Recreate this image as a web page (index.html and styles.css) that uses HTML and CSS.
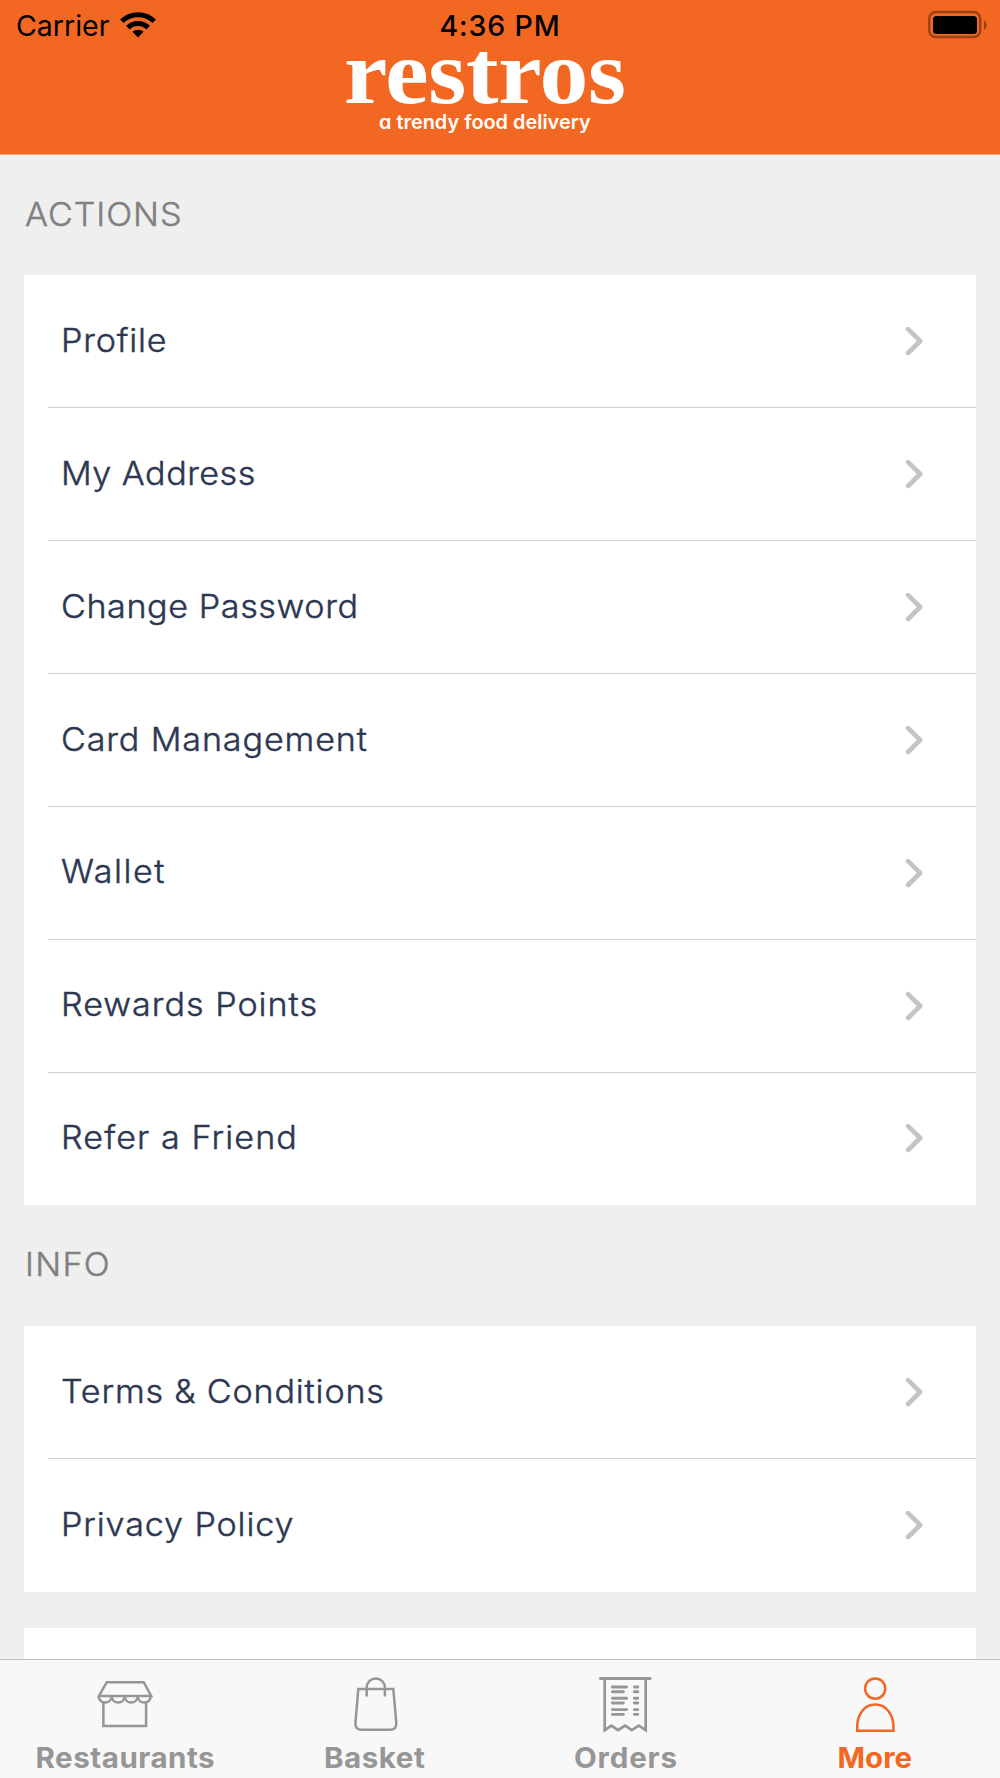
FILE: index.html
```html
<!DOCTYPE html>
<html lang="en">
<head>
<meta charset="utf-8">
<title>Restros</title>
<link rel="stylesheet" href="styles.css">
</head>
<body>
<svg class="defs" width="0" height="0">
  <symbol id="chevron" viewBox="0 0 20 32"><path d="M3.1 4.2 15.2 16 3.1 28" fill="none" stroke="currentColor" stroke-width="4.6" stroke-linecap="round" stroke-linejoin="round"/></symbol>
</svg>
<div class="screen">
  <header class="header">
    <div class="status">
      <div class="status-left">
        <span class="carrier">Carrier</span>
        <svg class="wifi" width="38" height="30" viewBox="0 0 38 30">
          <g fill="none" stroke="#000" stroke-width="5">
            <path d="M2.8 11.2a23.3 23.3 0 0 1 32.4 0"/>
            <path d="M8.8 17.6a14.8 14.8 0 0 1 20.4 0"/>
          </g>
          <path d="M19 27.5 13.4 21.8a8.3 8.3 0 0 1 11.2 0Z"/>
        </svg>
      </div>
      <span class="time">4:36 PM</span>
      <svg class="battery" width="60" height="30" viewBox="0 0 60 30">
        <rect x="1.2" y="2" width="51" height="25" rx="6.5" fill="none" stroke="#9c4214" stroke-width="2.4"/>
        <rect x="5" y="6" width="44" height="18" rx="3.5"/>
        <path d="M56 10.2q3 2 3 4.8t-3 4.8Z" fill="#9c4214"/>
      </svg>
    </div>
    <div class="brand">
      <div class="logo">restros</div>
      <div class="tagline">a trendy food delivery</div>
    </div>
  </header>

  <main class="content">
    <h2 class="section-title actions"><span>ACTIONS</span></h2>
    <ul class="card">
      <li class="row"><span class="label profile">Profile</span><svg class="chevron"><use href="#chevron"/></svg></li>
      <li class="row"><span class="label address">My Address</span><svg class="chevron"><use href="#chevron"/></svg></li>
      <li class="row"><span class="label password">Change Password</span><svg class="chevron"><use href="#chevron"/></svg></li>
      <li class="row"><span class="label cards">Card Management</span><svg class="chevron"><use href="#chevron"/></svg></li>
      <li class="row"><span class="label wallet">Wallet</span><svg class="chevron"><use href="#chevron"/></svg></li>
      <li class="row"><span class="label rewards">Rewards Points</span><svg class="chevron"><use href="#chevron"/></svg></li>
      <li class="row"><span class="label refer">Refer a Friend</span><svg class="chevron"><use href="#chevron"/></svg></li>
    </ul>
    <h2 class="section-title info"><span>INFO</span></h2>
    <ul class="card">
      <li class="row"><span class="label terms">Terms &amp; Conditions</span><svg class="chevron"><use href="#chevron"/></svg></li>
      <li class="row"><span class="label privacy">Privacy Policy</span><svg class="chevron"><use href="#chevron"/></svg></li>
    </ul>
    <div class="card next-card"></div>
  </main>

  <nav class="tabs">
    <a class="tab">
      <svg class="tab-icon" viewBox="0 0 60 60">
        <path d="M11.7 7.2h37L56.2 21H4Z"/>
        <path d="M3.8 21c-.6 8.7 12.9 8.7 12.9 0 0 8.7 13 8.7 13 0 0 8.7 13 8.7 13 0 0 8.7 13.5 8.7 12.9 0"/>
        <path d="M8.4 26.5V51h42.7V26.5"/>
      </svg>
      <span class="tab-label restaurants">Restaurants</span>
    </a>
    <a class="tab">
      <svg class="tab-icon" viewBox="0 0 60 60">
        <path d="M13.3 14h35L51.3 48q.3 6.7-6.3 6.7H16.7Q10 54.7 10.4 48Z"/>
        <path d="M21.7 21.5v-9a9.1 9.1 0 0 1 18.2 0v9"/>
      </svg>
      <span class="tab-label basket">Basket</span>
    </a>
    <a class="tab">
      <svg class="tab-icon" viewBox="0 0 60 60">
        <path stroke-width="2.8" stroke-linecap="round" d="M5.4 3.5h49.8"/>
        <path stroke-width="2.7" d="M9.7 4v51.2l6.7-4.5 6.7 4.5 7-4.5 6.7 4.5 7-4.5 6.9 4.5V4"/>
        <path stroke-width="2.9" stroke-linecap="round" d="M17.4 12h14.2M17.4 16.8h11M17.4 23.3h14.2M17.4 28h11M17.4 34.6h14.2M17.4 39.4h11M39.4 12h3.4M39.4 16.8h3.4M39.4 23.3h3.4M39.4 28h3.4M39.4 34.6h3.4M39.4 39.4h3.4"/>
      </svg>
      <span class="tab-label orders">Orders</span>
    </a>
    <a class="tab active">
      <svg class="tab-icon" viewBox="0 0 60 60">
        <circle cx="30.2" cy="13.6" r="10.1"/>
        <path d="M12.2 55.7C11.2 39 19.5 29.6 30.2 29.6S49.5 39 48.5 55.7Z"/>
      </svg>
      <span class="tab-label more">More</span>
    </a>
  </nav>
</div>
</body>
</html>
```
FILE: styles.css
```css
* { box-sizing: border-box; }
html, body { margin: 0; padding: 0; }
body { font-family: Inter, "Liberation Sans", sans-serif; background: #efefef; }
.defs { display: block; }
.screen {
  width: 1000px;
  height: 1778px;
  display: flex;
  flex-direction: column;
  overflow: hidden;
  background: #efefef;
}

.header {
  flex: none;
  height: 155px;
  background: #f26822;
  border-bottom: 1px solid #f5a680;
}
.status {
  display: grid;
  grid-template-columns: 1fr auto 1fr;
  align-items: center;
  height: 50px;
  padding: 0 12px 0 16px;
  color: #000;
  white-space: nowrap;
}
.status-left { display: flex; align-items: center; gap: 10px; }
.carrier { font-size: 28.5px; }
.time { font-size: 28.5px; font-weight: 500; letter-spacing: 0.85px; margin-right: 4px; padding-top: 1px; }
.battery { justify-self: end; }
.brand { width: 290px; margin-left: 344px; white-space: nowrap; }
.logo {
  height: 60px;
  line-height: 46px;
  font-family: "Liberation Serif", serif;
  font-size: 90px;
  font-weight: 700;
  letter-spacing: -0.3px;
  color: #fff;
  transform: scaleX(1.085);
  transform-origin: left;
}
.tagline {
  padding-left: 35px;
  height: 24px;
  line-height: 24px;
  font-size: 19.9px;
  font-weight: 600;
  font-feature-settings: "cv11";
  color: #fff;
}

.content { flex: 1; min-height: 0; overflow: hidden; padding: 0 24px; }
.section-title {
  margin: 0;
  height: 121px;
  line-height: 119px;
  padding-left: 1px;
  font-size: 32.5px;
  font-weight: 300;
  color: #808080;
  -webkit-text-stroke: 0.45px #808080;
  white-space: nowrap;
}
.section-title span, .label { display: inline-block; transform: scaleX(1.05); transform-origin: left; }
.section-title.actions { height: 120.4px; letter-spacing: 0.9px; }
.section-title.info { letter-spacing: 1.2px; }

.card { margin: 0; padding: 0; list-style: none; background: #fff; }
.row {
  display: flex;
  align-items: center;
  justify-content: space-between;
  height: 132.86px;
  margin-left: 24px;
  padding: 0 51px 0 12.5px;
  border-bottom: 1px solid #d0d0d2;
}
.row:last-child { border-bottom-color: transparent; }
.label {
  padding-bottom: 1.6px;
  font-size: 32.5px;
  font-weight: 300;
  color: #2d3752;
  -webkit-text-stroke: 0.45px #2d3752;
  white-space: nowrap;
}
.profile { letter-spacing: 0.75px; }
.address { letter-spacing: 0.45px; }
.password { letter-spacing: 0.56px; }
.cards { letter-spacing: 0.82px; }
.wallet { letter-spacing: 1.45px; }
.rewards { letter-spacing: 0.93px; }
.refer { letter-spacing: 1.03px; }
.terms { letter-spacing: 0.78px; }
.privacy { letter-spacing: 0.83px; }
.chevron { width: 20px; height: 32px; color: #c4c4c6; }
.next-card { height: 60px; margin-top: 36px; }

.tabs {
  flex: none;
  display: grid;
  grid-template-columns: repeat(4, 1fr);
  height: 119px;
  background: #f8f8f8;
  border-top: 1px solid #bdbdbd;
}
.tab { display: flex; flex-direction: column; align-items: center; padding-top: 15px; color: #969696; }
.tab-icon { width: 60px; height: 60px; fill: none; stroke: currentColor; stroke-width: 2.5; }
.tab-label { line-height: 40px; margin-top: 3px; font-size: 28.4px; font-weight: 700; white-space: nowrap; transform: scaleX(1.04); }
.restaurants { letter-spacing: 0.5px; }
.basket { letter-spacing: 0.5px; }
.orders { letter-spacing: 0.8px; margin-left: 2px; }
.active { color: #f26822; }
```
